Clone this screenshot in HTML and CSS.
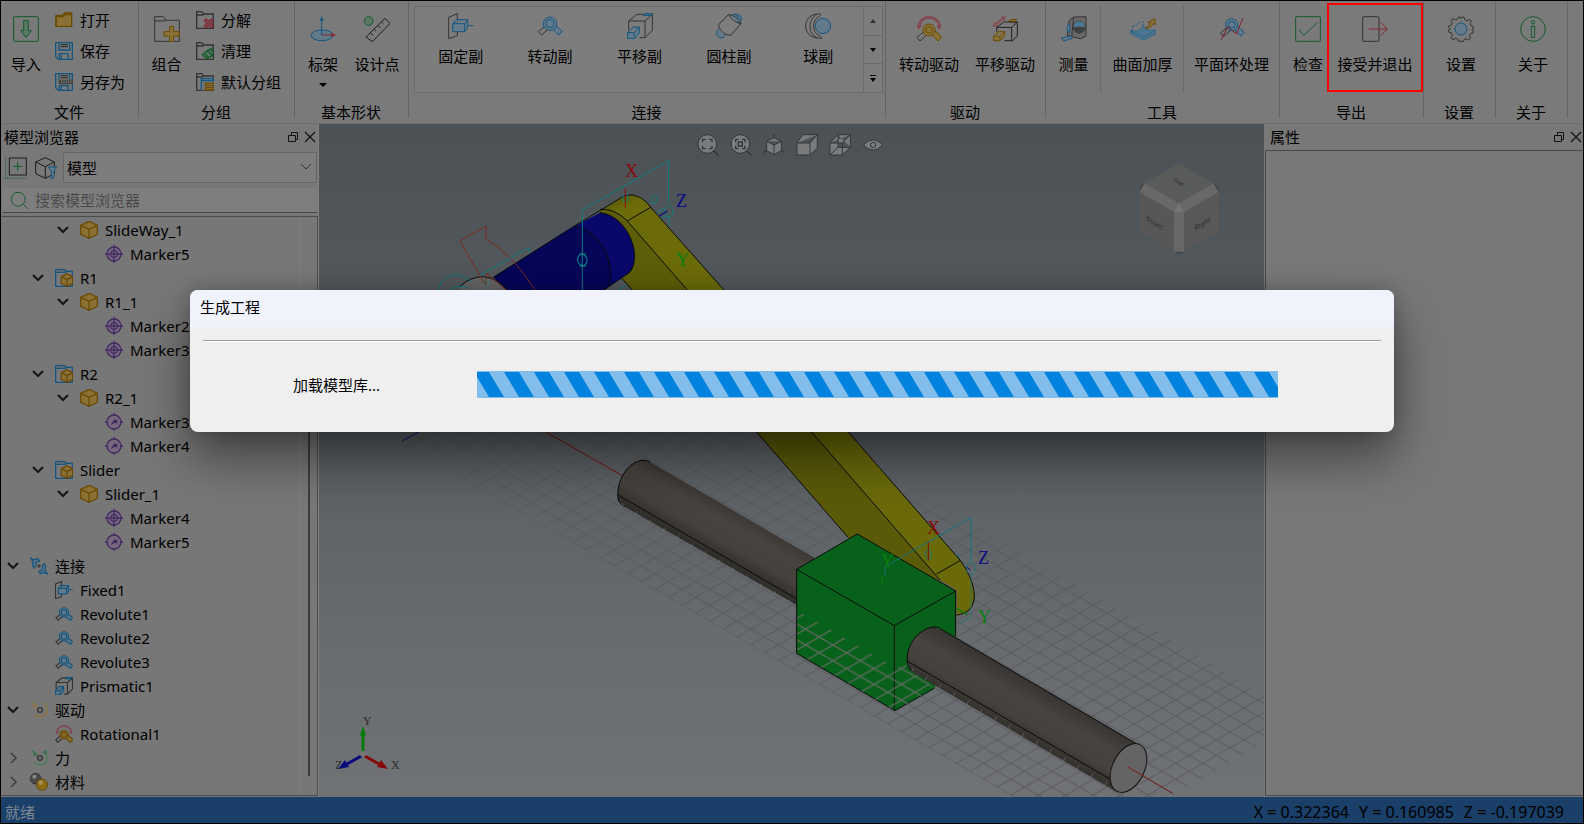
FILE: index.html
```html
<!DOCTYPE html>
<html lang="zh-CN">
<head>
<meta charset="utf-8">
<title>模型浏览器</title>
<link rel="stylesheet" href="styles.css">
</head>
<body>
<svg class="defs" aria-hidden="true">
  <symbol id="i-import" viewBox="0 0 78 78"><rect x="2" y="2" width="74" height="74" rx="2" class="gn"/><path d="M32 14h14v30h9L39 65 23 44h9z" class="gn gnf"/></symbol>
  <symbol id="i-open" viewBox="0 0 54 54"><path d="M3 13V46H50V6H28L24 13Z" class="go gof"/><path d="M3 46V17H26L30 11H50" class="go"/></symbol>
  <symbol id="i-save" viewBox="0 0 54 54"><path d="M2 2H52V52H10L2 44Z" class="bl"/><path d="M12 2V24H44V2M13 52V35H39V52M19 38V52" class="bl"/><path d="M17 8H39M17 14H39" class="gy"/></symbol>
  <symbol id="i-saveas" viewBox="0 0 54 54"><path d="M2 2H52V52H10L2 44Z" class="bl"/><path d="M12 2V20M44 2V20M13 52V38H39V52M19 40V52" class="bl"/><path d="M17 8H39M17 14H39" class="gy"/><rect x="11" y="20" width="43" height="14" fill="#454545"/><path d="M20 22V30M27 22V30M34 22V30M41 22V30M48 22V30" stroke="#858585" stroke-width="2"/></symbol>
  <symbol id="i-group" viewBox="0 0 80 80"><path d="M2 78V2H29L36 13H78V78Z" class="gy"/><path d="M2 15H36" class="gy"/><path d="M48 32H60V48H78V62H60V79H48V62H31V48H48Z" class="go gof"/></symbol>
  <symbol id="i-split" viewBox="0 0 54 54"><path d="M2 52V2H17L23 9H52V52ZM2 12H23" class="gy"/><path d="M24 29L31 23 38 30 45 23 52 29 46 37 53 44 46 51 38 44 31 51 24 44 31 37Z" fill="#80404a" stroke="#85202f" stroke-width="3"/></symbol>
  <symbol id="i-clean" viewBox="0 0 54 54"><path d="M2 52V2H17L23 9H52V52ZM2 12H23" class="gy"/><path d="M19 38L35 25 49 41 33 50ZM35 25L42 21 52 31 49 41ZM45 22L54 15" class="gn gnf"/><path d="M26 34L38 47" class="gn"/></symbol>
  <symbol id="i-default" viewBox="0 0 54 54"><path d="M2 52V2H17L23 9H52V52ZM2 12H23" class="gy"/><path d="M15 14H53V52H15Z" fill="#777"/><path d="M16 17H52V23H16ZM16 23V51" class="bl blf"/><path d="M28 31H53V38H28ZM28 44H53V51H28Z" class="go gof"/></symbol>
  <symbol id="i-frame" viewBox="0 0 78 78"><ellipse cx="36" cy="58" rx="33" ry="16" class="bl blf"/><path d="M35 57V8" class="bl"/><path d="M28 15L35 1 42 15Z" fill="#1c5a86"/><path d="M35 57H68" stroke="#8a2030" stroke-width="3"/><path d="M64 51L78 57 64 63Z" fill="#8a2030"/></symbol>
  <symbol id="i-ruler" viewBox="0 0 78 78"><circle cx="14" cy="15" r="13" class="gn gnf"/><path d="M6 63L63 7 78 22 25 77ZM20 51L27 58M31 40L36 45M42 29L49 36M53 18L58 23" class="gy dark"/></symbol>
  <symbol id="i-fixed" viewBox="0 0 78 78"><path d="M2 13L28 2V68L2 77Z" class="gy"/><path d="M14 32L26 20H59V43L50 56H14ZM14 32H50L59 20M50 32V56M59 38H77" class="bl blf"/></symbol>
  <symbol id="i-revolute" viewBox="0 0 78 60"><path d="M4 47L28 28 35 38 14 57Z" class="gy"/><path d="M45 38L54 27 76 46 66 57Z" class="bl blf"/><circle cx="39" cy="23" r="20" class="bl blf"/><circle cx="39" cy="23" r="12" class="bl"/></symbol>
  <symbol id="i-prism" viewBox="0 0 78 78"><path d="M5 24L30 4H76V52L54 74H38M5 24H54V74M54 24L76 4M5 24V52" class="gy"/><path d="M49 7L54 2H77L73 7Z" class="bl blf"/><path d="M2 59L18 42H37V60L23 77H2ZM2 59H22L37 42M22 59V77" class="bl blf"/></symbol>
  <symbol id="i-cyl" viewBox="0 0 78 78"><path d="M46 10C52 -4 78 6 77 18C76 27 68 30 61 27" class="bl blf"/><path d="M56 3L73 18" class="bl"/><path d="M8 35L37 5C50 4 70 18 75 32L45 66C30 70 8 52 8 35Z" class="gy"/><path d="M37 5C45 18 60 30 75 32" class="gy"/><path d="M9 49C-2 54 2 65 4 68C12 79 26 76 26 64" class="bl blf"/></symbol>
  <symbol id="i-ball" viewBox="0 0 78 78"><circle cx="54" cy="39" r="23" class="bl blf"/><path d="M44 3C-12 0 -12 78 44 75C58 80 48 70 42 68C20 55 20 22 42 11C48 7 50 4 44 3ZM36 4C8 18 8 62 36 75" class="gy"/></symbol>
  <symbol id="i-rotdrv" viewBox="0 0 78 78"><path d="M9 29C14 -4 66 -4 70 29" fill="none" stroke="#87404a" stroke-width="8"/><path d="M9 29C14 -4 66 -4 70 29" fill="none" stroke="#80656a" stroke-width="2"/><path d="M2 28H18L8 41ZM62 28H77L70 41Z" fill="#87404a"/><path d="M3 64L28 44 36 54 12 75Z" class="gy"/><path d="M45 54L54 42 77 62 66 75Z" class="go gof"/><circle cx="39" cy="42" r="18" class="go gof"/><circle cx="39" cy="42" r="10" class="go"/></symbol>
  <symbol id="i-lindrv" viewBox="0 0 82 82"><path d="M3 32L8 19 12 23 32 7 29 3 43 2 38 14 34 11 14 28 17 32Z" fill="#80555b" stroke="#87404a" stroke-width="2"/><path d="M53 16L60 11H77L74 20Z" class="go gof"/><path d="M15 36L36 19H80V63L64 78H39M15 36H62V78M62 36L80 19M15 36V50" class="gy dark"/><path d="M5 64L20 49H40V62L26 78H5ZM5 64H25L40 49M25 64V78" class="go gof"/></symbol>
  <symbol id="i-tape" viewBox="0 0 80 80"><path d="M25 14L40 3 77 2V62L60 70 19 60Z" class="gy gyf"/><path d="M39 4L33 62" class="gy"/><circle cx="56" cy="34" r="18" class="gy"/><path d="M38 34A18 18 0 0 1 74 34Q56 28 38 34Z" fill="#467a98"/><path d="M38 36Q56 30 74 36A18 18 0 0 1 38 36Z" fill="#3e4245"/><path d="M22 28Q14 40 20 48L27 50V26Z" class="bl blf"/><path d="M1 68L34 61 34 69 9 77Z" class="bl blf"/></symbol>
  <symbol id="i-surf" viewBox="0 0 84 78"><path d="M2 44L24 46 44 30 62 44 82 42V56L44 75 2 54Z" fill="#4c7690" stroke="#1c5f88" stroke-width="2"/><path d="M2 46L44 66 82 44M10 30L34 17M8 46V28M42 30V14" class="bl" stroke-dasharray="6 4"/><path d="M48 37C58 32 64 24 66 18L58 18 80 5 82 26 76 20C72 31 62 37 48 37Z" class="go gof"/></symbol>
  <symbol id="i-ring" viewBox="0 0 78 72"><path d="M4 49L26 29 34 41 14 58Z" class="gy"/><path d="M45 38L54 27 76 46 66 57Z" class="bl blf"/><circle cx="38" cy="23" r="18" class="bl blf"/><circle cx="38" cy="23" r="10" class="bl"/><path d="M7 68L26 29 52 51 72 3" fill="none" stroke="#851c2b" stroke-width="3"/></symbol>
  <symbol id="i-check" viewBox="0 0 78 78"><rect x="2" y="2" width="74" height="74" rx="2" class="gn"/><path d="M12 42L26 58 67 20" class="gn"/></symbol>
  <symbol id="i-exit" viewBox="0 0 78 78"><rect x="2" y="2" width="49" height="74" rx="4" class="gy"/><path d="M20 39H74M57 20L76 39 57 58" fill="none" stroke="#8c2436" stroke-width="3"/></symbol>
  <symbol id="i-gear" viewBox="0 0 78 78"><path d="M31 3H36L39 8 42 3H48L50 11 57 15 65 10 70 15 66 23 69 29 76 32V38L71 41 76 44V50L68 53 64 59 68 67 62 72 54 68 48 71 46 76H32L30 70 23 67 15 71 9 66 13 58 9 50 2 48V42L7 39 2 35V30L10 27 13 20 9 13 15 8 23 12 29 9Z" class="gy"/><circle cx="39" cy="39" r="18" class="bl blf"/></symbol>
  <symbol id="i-about" viewBox="0 0 78 78"><circle cx="39" cy="39" r="37" class="gn"/><circle cx="39" cy="19" r="5" class="gn"/><rect x="34" y="31" width="10" height="33" class="gn"/></symbol>
  <symbol id="i-part" viewBox="0 0 54 54"><path d="M2 13L28 1 52 13V39L27 52 2 40Z" class="go gof"/><path d="M2 13L27 25 52 13M27 25V52" class="go"/></symbol>
  <symbol id="i-asm" viewBox="0 0 54 54"><path d="M2 52V2H28L34 7H52V52Z" class="bl"/><path d="M2 10H34" class="bl"/><path d="M19 23L36 14 53 23V43L36 52 19 43Z" class="go gof"/><path d="M19 23L36 32 53 23M36 32V52" class="go"/></symbol>
  <symbol id="i-mark" viewBox="0 0 54 54"><circle cx="27" cy="27" r="21" class="pu puf"/><circle cx="27" cy="27" r="10" class="pu"/><path d="M27 0V54M0 27H54" class="pu"/></symbol>
  <symbol id="i-markref" viewBox="0 0 54 54"><circle cx="27" cy="27" r="21" class="pu puf"/><path d="M27 0V8M27 46V54M0 27H8M46 27H54" class="pu"/><path d="M18 37Q19 27 27 25L24 20H37V33L32 29Q24 30 18 37Z" fill="#43285f"/></symbol>
  <symbol id="i-joints" viewBox="0 0 54 54"><path d="M2 3L12 9 23 4 28 12 18 15 18 24 13 33 8 26 10 17ZM52 51L42 46 31 50 27 43 37 39 37 27 42 20 47 28 45 39Z" class="bl blf"/><circle cx="27" cy="27" r="5" fill="#3c3c3c"/></symbol>
  <symbol id="i-drives" viewBox="0 0 54 54"><path d="M2 2L10 5 18 13 20 9 22 22 9 20 13 17Z" fill="#8a7340"/><path d="M38 9H50M48 14C60 35 42 58 12 42" fill="none" stroke="#86744c" stroke-width="6"/><circle cx="30" cy="27" r="7" class="gy"/></symbol>
  <symbol id="i-forces" viewBox="0 0 54 54"><path d="M2 2L10 5 18 13 20 9 22 22 9 20 13 17Z" fill="#3e7352"/><path d="M48 16C60 35 42 58 12 42" fill="none" stroke="#587c65" stroke-width="6"/><path d="M36 10L51 2 50 20Z" fill="#3e7352"/><circle cx="30" cy="27" r="7" class="gy"/></symbol>
  <symbol id="i-mat" viewBox="0 0 54 54"><circle cx="17" cy="17" r="16" fill="#4a4a4a" stroke="#222" stroke-width="2"/><circle cx="13" cy="11" r="6" fill="#888"/><circle cx="36" cy="35" r="17" fill="#8a6a14" stroke="#4e3903" stroke-width="2"/><circle cx="32" cy="29" r="7" fill="#a48f4b"/></symbol>
  <symbol id="i-down" viewBox="0 0 16 16"><path d="M3 5L8 10 13 5" fill="none" stroke="#151515" stroke-width="2"/></symbol>
  <symbol id="i-right" viewBox="0 0 16 16"><path d="M6 3L11 8 6 13" fill="none" stroke="#3c3c3c" stroke-width="1.5"/></symbol>
  <symbol id="i-float" viewBox="0 0 12 12"><path d="M1.500 4.500H8.500V10.500H1.500ZM4.500 4V1.500H10.500V8.500H9" fill="none" stroke="#111"/></symbol>
  <symbol id="i-close" viewBox="0 0 12 12"><path d="M1 1L11 11M11 1L1 11" fill="none" stroke="#111" stroke-width="1.200"/></symbol>
</svg>

<div class="app">
  <header class="ribbon">
    <section class="group g-file">
      <div class="tools">
        <button class="big"><svg><use href="#i-import"/></svg>导入</button>
        <div class="stack">
          <button class="small"><svg><use href="#i-open"/></svg>打开</button>
          <button class="small"><svg><use href="#i-save"/></svg>保存</button>
          <button class="small"><svg><use href="#i-saveas"/></svg>另存为</button>
        </div>
      </div>
      <h2>文件</h2>
    </section>
    <section class="group g-group">
      <div class="tools">
        <button class="big"><svg><use href="#i-group"/></svg>组合</button>
        <div class="stack">
          <button class="small"><svg><use href="#i-split"/></svg>分解</button>
          <button class="small"><svg><use href="#i-clean"/></svg>清理</button>
          <button class="small"><svg><use href="#i-default"/></svg>默认分组</button>
        </div>
      </div>
      <h2>分组</h2>
    </section>
    <section class="group g-shape">
      <div class="tools">
        <button class="big"><svg><use href="#i-frame"/></svg>标架<i class="caret"></i></button>
        <button class="big"><svg><use href="#i-ruler"/></svg>设计点</button>
      </div>
      <h2>基本形状</h2>
    </section>
    <section class="group g-joint">
      <div class="gallery">
        <button class="item"><svg><use href="#i-fixed"/></svg>固定副</button>
        <button class="item"><svg><use href="#i-revolute"/></svg>转动副</button>
        <button class="item"><svg><use href="#i-prism"/></svg>平移副</button>
        <button class="item"><svg><use href="#i-cyl"/></svg>圆柱副</button>
        <button class="item"><svg><use href="#i-ball"/></svg>球副</button>
        <div class="pager">
          <button aria-label="上一行"><i class="caret up"></i></button>
          <button aria-label="下一行"><i class="caret"></i></button>
          <button aria-label="更多"><i class="caret more"></i></button>
        </div>
      </div>
      <h2>连接</h2>
    </section>
    <section class="group g-drive">
      <div class="tools">
        <button class="big"><svg><use href="#i-rotdrv"/></svg>转动驱动</button>
        <button class="big"><svg><use href="#i-lindrv"/></svg>平移驱动</button>
      </div>
      <h2>驱动</h2>
    </section>
    <section class="group g-tool">
      <div class="tools">
        <button class="big w1"><svg><use href="#i-tape"/></svg>测量</button>
        <button class="big w2"><svg><use href="#i-surf"/></svg>曲面加厚</button>
        <button class="big w3"><svg><use href="#i-ring"/></svg>平面环处理</button>
      </div>
      <h2>工具</h2>
    </section>
    <section class="group g-export">
      <div class="tools">
        <button class="big check"><svg><use href="#i-check"/></svg>检查</button>
        <button class="big marked"><svg><use href="#i-exit"/></svg>接受并退出</button>
      </div>
      <h2>导出</h2>
    </section>
    <section class="group g-one">
      <div class="tools"><button class="big"><svg><use href="#i-gear"/></svg>设置</button></div>
      <h2>设置</h2>
    </section>
    <section class="group g-one">
      <div class="tools"><button class="big"><svg><use href="#i-about"/></svg>关于</button></div>
      <h2>关于</h2>
    </section>
  </header>

  <main class="work">
    <aside class="dock browser">
      <div class="dock-title"><h1>模型浏览器</h1><button aria-label="浮动"><svg><use href="#i-float"/></svg></button><button aria-label="关闭"><svg><use href="#i-close"/></svg></button></div>
      <div class="filter">
        <button aria-label="全部展开"><svg viewBox="0 0 66 66"><path d="M2 2V64H66" class="gn" stroke-dasharray="3 3"/><rect x="13" y="3" width="51" height="51" class="gy dark"/><path d="M38 14V43M24 28H53" class="gn"/></svg></button>
        <button aria-label="筛选"><svg viewBox="0 0 66 66"><path d="M2 15L31 2 58 15V50L31 64 2 50ZM2 15L31 29 58 15M31 29V64" class="gy dark"/><path d="M40 30H66L57 42V60L49 66V42Z" class="bl blf"/></svg></button>
        <label class="combo"><select aria-label="视图"><option>模型</option></select><svg viewBox="0 0 18 16"><path d="M4 5L9 10 14 5" fill="none" stroke="#333"/></svg></label>
      </div>
      <label class="search"><svg viewBox="0 0 60 60"><circle cx="26" cy="26" r="22" class="gn"/><path d="M42 42L56 56" class="gn"/></svg><input type="text" placeholder="搜索模型浏览器" aria-label="搜索模型浏览器"></label>
      <div class="tree">
        <ul>
          <li class="d2"><button aria-label="折叠"><svg><use href="#i-down"/></svg></button><svg><use href="#i-part"/></svg>SlideWay_1</li>
          <li class="d3"><svg><use href="#i-mark"/></svg>Marker5</li>
          <li class="d1"><button aria-label="折叠"><svg><use href="#i-down"/></svg></button><svg><use href="#i-asm"/></svg>R1</li>
          <li class="d2"><button aria-label="折叠"><svg><use href="#i-down"/></svg></button><svg><use href="#i-part"/></svg>R1_1</li>
          <li class="d3"><svg><use href="#i-mark"/></svg>Marker2</li>
          <li class="d3"><svg><use href="#i-mark"/></svg>Marker3</li>
          <li class="d1"><button aria-label="折叠"><svg><use href="#i-down"/></svg></button><svg><use href="#i-asm"/></svg>R2</li>
          <li class="d2"><button aria-label="折叠"><svg><use href="#i-down"/></svg></button><svg><use href="#i-part"/></svg>R2_1</li>
          <li class="d3"><svg><use href="#i-markref"/></svg>Marker3</li>
          <li class="d3"><svg><use href="#i-markref"/></svg>Marker4</li>
          <li class="d1"><button aria-label="折叠"><svg><use href="#i-down"/></svg></button><svg><use href="#i-asm"/></svg>Slider</li>
          <li class="d2"><button aria-label="折叠"><svg><use href="#i-down"/></svg></button><svg><use href="#i-part"/></svg>Slider_1</li>
          <li class="d3"><svg><use href="#i-mark"/></svg>Marker4</li>
          <li class="d3"><svg><use href="#i-markref"/></svg>Marker5</li>
          <li class="d0"><button aria-label="折叠"><svg><use href="#i-down"/></svg></button><svg><use href="#i-joints"/></svg>连接</li>
          <li class="d1 leaf"><svg><use href="#i-fixed"/></svg>Fixed1</li>
          <li class="d1 leaf"><svg><use href="#i-revolute"/></svg>Revolute1</li>
          <li class="d1 leaf"><svg><use href="#i-revolute"/></svg>Revolute2</li>
          <li class="d1 leaf"><svg><use href="#i-revolute"/></svg>Revolute3</li>
          <li class="d1 leaf"><svg><use href="#i-prism"/></svg>Prismatic1</li>
          <li class="d0"><button aria-label="折叠"><svg><use href="#i-down"/></svg></button><svg><use href="#i-drives"/></svg>驱动</li>
          <li class="d1 leaf"><svg><use href="#i-rotdrv"/></svg>Rotational1</li>
          <li class="d0"><button aria-label="展开"><svg><use href="#i-right"/></svg></button><svg><use href="#i-forces"/></svg>力</li>
          <li class="d0"><button aria-label="展开"><svg><use href="#i-right"/></svg></button><svg><use href="#i-mat"/></svg>材料</li>
        </ul>
        <div class="track"><div class="thumb"></div></div>
      </div>
    </aside>

    <section class="view" aria-label="三维视图">
      <svg class="scene" viewBox="319 124 945 673" preserveAspectRatio="xMidYMid slice">
        <defs>
          <pattern id="grid" width="27.4" height="15.8" patternUnits="userSpaceOnUse" x="600" y="558"><path d="M0 0L27.4 15.8M0 15.8L27.4 0" stroke="#555457" stroke-width="1" fill="none"/></pattern>
          <pattern id="gridlight" width="27.4" height="15.8" patternUnits="userSpaceOnUse" x="600" y="558"><path d="M0 0L27.4 15.8M0 15.8L27.4 0" stroke="#60695f" stroke-width="1.3" fill="none"/></pattern>
          <linearGradient id="shaft" gradientUnits="userSpaceOnUse" x1="735" y1="505" x2="708" y2="552"><stop offset="0" stop-color="#373432"/><stop offset=".35" stop-color="#48433f"/><stop offset=".7" stop-color="#45413d"/><stop offset="1" stop-color="#302e2a"/></linearGradient>
          <linearGradient id="shaft2" gradientUnits="userSpaceOnUse" x1="1040" y1="687" x2="1013" y2="734"><stop offset="0" stop-color="#373432"/><stop offset=".35" stop-color="#48433f"/><stop offset=".7" stop-color="#45413d"/><stop offset="1" stop-color="#302e2a"/></linearGradient>
          <linearGradient id="cap" x1="0" y1="0" x2="1" y2="1"><stop offset="0" stop-color="#4a4a06"/><stop offset=".5" stop-color="#6c6c0a"/><stop offset="1" stop-color="#6c6c0a"/></linearGradient>
        </defs>
        <path d="M378 430L1092 842 1307 718 760 402H427Z" fill="url(#grid)" opacity=".8"/>
        <path d="M402 441L419 432" stroke="#10106a" fill="none"/>
        <path d="M546 432L623 476" stroke="#7a1414" fill="none"/>

        <path d="M643 460C625 462 616 482 618 500L625 507 800 607 815 558 650 462Z" fill="url(#shaft)"/>
        <path d="M650 462Q647 460 643 460C627 462 616 482 618 498Q619 504 625 507M618 495L797 599" class="edge"/>

        <g transform="translate(600 430) scale(.3333)">
          <path d="M470 6L635 6 1020 450 960 440 745 323Z" fill="#5a5a09"/>
          <path d="M635 6H745L1080 390C1110 430 1128 480 1122 510Q1118 548 1070 556V480L1020 450Z" fill="#6a6a0a"/>
          <path d="M470 6L745 323M635 6L1020 450M745 6L1080 390C1110 430 1128 480 1122 510Q1118 548 1070 556M1010 432L1080 392" class="edge3"/>
          <path d="M772 312L1067 483V618L1003 775 885 842 588 670 590 418Z" fill="#07611a"/>
          <path d="M590 418L772 312 1067 483V618M1067 483L883 587 590 418V670L885 842 1003 775M883 587V842" class="edge3"/>
        </g>
        <path d="M797 614L804 614 896 668 907 664 934 688 895 711 797 653Z" fill="url(#gridlight)"/>

        <path d="M933 627C915 630 904 650 908 664L912 672 1117 792 1137 744 944 631Z" fill="url(#shaft2)"/>
        <path d="M1137 744L944 631Q939 626 933 627C915 630 904 650 908 666L912 672M907 661L1110 779" class="edge"/>
        <path d="M912 670L1114 788" stroke="#777" stroke-width="4" stroke-dasharray="1 15" opacity=".55" fill="none"/>
        <path d="M622 505L795 605" stroke="#777" stroke-width="4" stroke-dasharray="1 15" opacity=".55" fill="none"/>
        <ellipse cx="1128.500" cy="768" rx="16" ry="26" transform="rotate(26 1128.500 768)" fill="#646464" stroke="#111"/>
        <path d="M1128 767L1172 793" stroke="#7a1818" fill="none"/>

        <g transform="translate(600 430) scale(.3333)" fill="none" stroke-width="3">
          <path d="M855 435V410L1113 263V395" stroke="#14767b"/>
          <path d="M1113 430V560L1070 586" stroke="#14767b" stroke-dasharray="6 4"/>
          <ellipse cx="985" cy="373" rx="9" ry="15" stroke="#14767b"/><ellipse cx="1113" cy="415" rx="13" ry="18" stroke="#14767b" stroke-dasharray="12 4"/>
          <path d="M1068 374L1080 380" stroke="#14767b"/>
          <path d="M985 337V392" stroke="#7c0c0c"/><path d="M847 443V461M1070 536L1102 554" stroke="#0a7d0a" stroke-width="4"/>
          <path d="M1100 412L1112 420" stroke="#0a0a80"/>
        </g>
        <text x="927" y="534" class="ax r">X</text><text x="978" y="564" class="ax b">Z</text><text x="978" y="623" class="ax g">Y</text><text x="881" y="567" class="ax g">Y</text>

        <g transform="translate(420 120) scale(.3333)">
          <path d="M120 500Q150 470 190 470Q235 475 262 510H120Z" fill="#686664"/>
          <path d="M535 275L612 228C640 218 672 232 692 262L912 510H637L600 470 622 303Z" fill="#6b6b0a"/>
          <path d="M535 275L612 228C640 218 672 232 692 262L622 303Q580 265 535 275Z" fill="url(#cap)"/>
          <path d="M540 272Q585 262 622 303L802 510H637L590 460Z" fill="#5e5e08"/>
          <path d="M220 472L460 320 540 278C610 285 650 370 643 420Q640 450 625 460L552 510H260Z" fill="#08086a"/>
          <path d="M220 472L460 320C540 330 585 420 568 498L552 510H260Z" fill="#060659"/>
          <path d="M120 500Q150 470 190 470Q235 475 262 510M220 472L460 320 612 228C640 218 672 232 692 262L912 510M540 268Q585 265 622 303L802 510M622 303L692 262M460 320C540 330 585 420 568 498M540 278C610 285 650 370 643 420Q640 450 625 460L552 510M605 475L637 510" class="edge3"/>
          <g fill="none" stroke-width="3">
            <path d="M120 363L198 318V357Q280 405 345 510M120 363L196 495M200 460L258 510M200 460L196 492" stroke="#7e2a20"/>
            <path d="M487 510V270L746 122V250M746 290V318M327 400V383L180 466" stroke="#0e7c7c"/>
            <path d="M57 508C64 460 125 450 158 490M95 508C110 495 140 498 150 508M595 508L620 494" stroke="#0e7c7c"/>
            <ellipse cx="487" cy="420" rx="14" ry="17" stroke="#0e8c8c" transform="rotate(-15 487 420)"/><path d="M478 402H498M478 438H498" stroke="#0e8c8c"/>
            <ellipse cx="616" cy="234" rx="8" ry="12" stroke="#0e7c7c"/><ellipse cx="702" cy="240" rx="8" ry="12" stroke="#0e7c7c" transform="rotate(25 702 240)"/><ellipse cx="746" cy="274" rx="13" ry="18" stroke="#0e7c7c" stroke-dasharray="10 3"/><path d="M710 278L738 262M722 297L746 284" stroke="#0e7c7c"/>
            <ellipse cx="200" cy="490" rx="8" ry="11" stroke="#3c7c7c"/>
            <path d="M616 206V263" stroke="#8c0c0c"/><path d="M718 288L742 273" stroke="#0a0a8c" stroke-width="4"/>
          </g>
        </g>
        <text x="625" y="177" class="ax r">X</text><text x="676" y="207" class="ax b">Z</text><text x="676" y="266" class="ax g">Y</text>

        <g transform="translate(1080 140) scale(.3333)">
          <path d="M178 145L188 130 208 140 190 160ZM402 130L416 142V155L400 160ZM280 333H314L297 344Z" fill="#444648"/>
          <path d="M297 70L400 130 297 190 193 130Z" fill="#595a5a"/>
          <path d="M178 155L282 215V335L178 275Z" fill="#575757"/><path d="M312 215L416 155V275L312 335Z" fill="#585858"/>
          <path d="M193 130L297 190 282 216 179 156ZM400 130L297 190 312 216 416 156ZM282 216L297 188 312 216V335H282Z" fill="#686868"/>
          <path d="M282 216L297 188 312 216Z" fill="#757575"/>
          <g font-family="Noto Sans, sans-serif" font-size="22" fill="#2a2a2a"><text transform="matrix(.87 .5 -.6 .5 276 121)">Top</text><text transform="matrix(.87 .5 0 1 200 244)">Front</text><text transform="matrix(.87 -.5 0 1 344 272)">Right</text></g>
        </g>

        <g fill="none" stroke-width="3"><path d="M363 755V735" stroke="#087a08"/><path d="M363 755L379 764" stroke="#850808"/><path d="M363 755L347 764" stroke="#08087c"/></g>
        <path d="M363 726L360 735Q363 738 366 735Z" fill="#087a08"/><path d="M388 769L381 760 377 767Z" fill="#850808"/><path d="M338 769L345 760 349 767Z" fill="#08087c"/><circle cx="363" cy="754" r="3" fill="#777"/>
        <g class="triad"><text x="363" y="725">Y</text><text x="391" y="769">X</text><text x="335" y="769">Z</text></g>
      </svg>
      <div class="viewbar">
        <button aria-label="适合窗口"><svg viewBox="0 0 66 66"><path d="M50 50L64 64" class="vd"/><circle cx="31" cy="30" r="28" class="vl"/><path d="M17 25V16H26M36 16H45V25M45 35V44H36M26 44H17V35" class="vd"/></svg></button>
        <button aria-label="适合选择"><svg viewBox="0 0 66 66"><path d="M50 50L64 64" class="vd"/><circle cx="31" cy="30" r="28" class="vl"/><path d="M17 25V16H26M36 16H45V25M45 35V44H36M26 44H17V35M25 24H37V36H25Z" class="vd"/></svg></button>
        <button aria-label="坐标轴"><svg viewBox="0 0 66 66"><path d="M33 0V10M10 50L1 55M56 50L65 55" class="vd"/><path d="M11 22L33 11 55 22V50L33 62 11 50ZM11 22L33 33 55 22M33 33V62" class="vl"/></svg></button>
        <button aria-label="着色"><svg viewBox="0 0 66 66"><path d="M3 27L20 2H64V42L42 63H3ZM3 27H42L64 2M42 27V63" class="vl"/></svg></button>
        <button aria-label="线框"><svg viewBox="0 0 66 66"><path d="M3 27L27 2H64V40L40 63H3ZM3 27H40L64 2M40 27V63M27 2V40H64M27 40L3 63" class="vl"/></svg></button>
        <button aria-label="可见性"><svg viewBox="0 0 66 66"><path d="M4 33Q33 2 62 33Q33 64 4 33Z" class="vl"/><circle cx="33" cy="33" r="8" class="vl"/></svg></button>
      </div>
    </section>

    <aside class="dock props">
      <div class="dock-title"><h1>属性</h1><button aria-label="浮动"><svg><use href="#i-float"/></svg></button><button aria-label="关闭"><svg><use href="#i-close"/></svg></button></div>
      <div class="pane"></div>
    </aside>
  </main>

  <footer class="status"><span class="ready">就绪</span><span class="coord">X = 0.322364</span><span class="coord">Y = 0.160985</span><span class="coord">Z = -0.197039</span></footer>

  <div class="overlay">
    <div class="dialog" role="dialog" aria-modal="true" aria-labelledby="dlg">
      <h2 id="dlg">生成工程</h2>
      <hr>
      <div class="progress-row">
        <span id="msg">加载模型库...</span>
        <div class="bar" role="progressbar" aria-labelledby="msg"><svg><defs><pattern id="stripe" width="30" height="25" patternUnits="userSpaceOnUse" x="-3" y="0"><path d="M0 0H15L30 25H15Z" fill="#0083de"/></pattern></defs><rect width="100%" height="25" fill="url(#stripe)"/></svg></div>
      </div>
    </div>
  </div>
</div>
</body>
</html>
```
FILE: styles.css
```css
* { box-sizing: border-box; }
body {
  margin: 0;
  font: 15px/20px "Noto Sans", "Noto Sans CJK SC", sans-serif;
  color: #000;
}
h1, h2 { margin: 0; font-size: 15px; font-weight: 400; }
button, input, select { font: inherit; color: inherit; background: none; border: 0; padding: 0; margin: 0; }
.defs { position: absolute; width: 0; height: 0; }

.gn, .bl, .go, .gy, .pu { fill: none; stroke-width: var(--line, 3); }
.gn { stroke: #145a2e; }
.bl { stroke: #14567f; }
.go { stroke: #6b4b04; }
.gy { stroke: #333; }
.pu { stroke: #452a62; }
.gnf { fill: #5b7864; }
.blf { fill: #637a8a; }
.gof { fill: #8a7237; }
.gyf { fill: #686868; }
.puf { fill: #756a80; }
.gy.dark { stroke: #1c1c1c; }
.vl { fill: #7a7b7c; stroke: #333638; stroke-width: 3; }
.vd { fill: none; stroke: #333638; stroke-width: 4; }

.app {
  position: relative;
  display: flex;
  flex-direction: column;
  height: 100vh;
  border: 1px solid #000;
  overflow: hidden;
  background: #787878;
}

/* ribbon */
.ribbon { display: flex; flex: none; height: 123px; background: #7a7a7a; border-bottom: 1px solid #6d6d6d; }
.group {
  display: flex;
  flex-direction: column;
  flex: none;
  background: linear-gradient(#656565, #656565) right top / 1px 117px no-repeat;
}
.group > h2 { text-align: center; margin-top: auto; padding: 0 2px 1px 0; }
.tools { display: flex; height: 93px; }
.big { display: flex; flex-direction: column; align-items: center; padding-top: 15px; white-space: nowrap; }
.big svg { width: 26px; height: 26px; margin-bottom: 12px; }
.stack { display: flex; flex-direction: column; padding: 3px 0 0 4px; }
.small { display: flex; align-items: center; flex: none; gap: 7px; height: 31px; white-space: nowrap; --line: 4; }
.small svg { width: 18px; height: 18px; }
.caret { width: 0; height: 0; border: 4px solid transparent; border-top-color: #000; border-bottom: 0; }
.big .caret { margin-top: 9px; }
.g-file { width: 138px; }
.g-file .big { width: 50px; }
.g-group { width: 156px; }
.g-group .tools { padding-left: 2px; }
.g-group .big { width: 51px; }
.g-shape { width: 114px; }
.g-shape .tools { padding-left: 1px; }
.g-shape .big { width: 54px; }
.g-joint { width: 477px; }
.g-drive { width: 160px; }
.g-drive .tools { padding-left: 5px; }
.g-drive .big { width: 76px; }
.g-tool { width: 234px; }
.g-tool .w1, .g-tool .w2 { background: linear-gradient(#696969, #696969) right 5px / 1px 87px no-repeat; }
.w1 { width: 55px; }
.w2 { width: 83px; }
.w3 { width: 95px; }
.g-export { width: 144px; }
.check { width: 38px; margin-left: 9px; }
.marked { position: relative; width: 96px; }
.marked::after { content: ""; position: absolute; inset: 2px 0 2px 0; border: 2px solid #f00; }
.g-one { width: 72px; }
.g-one .tools { justify-content: center; padding-left: 2px; }

.gallery { display: flex; margin: 5px 3px 0 5px; padding-left: 1px; height: 87px; border: 1px solid #6b6b6b; background: #7d7d7d; }
.item { display: flex; flex-direction: column; align-items: center; flex: 1; padding-top: 6px; }
.item svg { width: 26px; height: 26px; margin-bottom: 7px; }
.pager { display: flex; flex-direction: column; width: 19px; border-left: 1px solid #6b6b6b; }
.pager button { display: flex; flex: 1; flex-direction: column; align-items: center; justify-content: center; }
.pager button + button { border-top: 1px solid #6b6b6b; }
.pager .caret { border-width: 4px 3px 0; }
.pager .up { border-top: 0; border-bottom: 4px solid #333; }
.pager button:last-child::before { content: ""; width: 6px; height: 1px; background: #000; margin-bottom: 2px; }

/* work area */
.work { display: flex; flex: 1; min-height: 0; }
.dock { display: flex; flex-direction: column; flex: none; }
.dock-title { display: flex; align-items: center; gap: 5px; height: 26px; padding: 0 2px 0 3px; }
.dock-title h1 { flex: 1; }
.dock-title button { display: flex; }
.dock-title svg { width: 12px; height: 12px; }
.browser { width: 318px; border-right: 1px solid #828282; }
.filter { display: flex; align-items: center; height: 35px; padding: 1px 1px 1px 4px; gap: 8px; }
.filter button { display: flex; }
.filter button svg { width: 22px; height: 22px; }
.combo { position: relative; display: flex; flex: 1; margin-left: -2px; }
.combo select { appearance: none; width: 100%; height: 31px; padding-left: 3px; border: 1px solid #656565; border-radius: 2px; background: #7d7d7d; }
.combo svg { position: absolute; right: 2px; top: 7px; width: 18px; height: 16px; }
.search { display: flex; align-items: center; height: 25px; margin: 3px 1px 0 1px; padding-left: 8px; gap: 6px; background: #7e7e7e; border-bottom: 1px solid #484848; }
.search svg { width: 19px; height: 19px; flex: none; }
.search input { flex: 1; min-width: 0; outline: 0; }
.search input::placeholder { color: #4a4a4a; opacity: 1; }
.tree { --line: 4; display: flex; flex: 1; min-height: 0; margin: 3px 0 1px 0; border: solid #4c4c4c; border-width: 1px 1px 1px 0; overflow: hidden; background: #777; }
.tree ul { flex: 1; margin: 0; padding: 1px 0 0; list-style: none; }
.tree li { display: flex; align-items: center; height: 24px; white-space: nowrap; }
.tree li > svg { width: 18px; height: 18px; margin: 0 7px 0 4px; }
.tree li button { display: flex; width: 25px; padding-left: 4px; }
.tree li button svg { width: 16px; height: 16px; }
.d1 { padding-left: 25px; }
.d2 { padding-left: 50px; }
.d3 { padding-left: 100px; }
.d1.leaf { padding-left: 50px; --line: 5; }
.track { display: flex; flex-direction: column; align-items: center; justify-content: flex-end; width: 18px; padding-bottom: 19px; border-left: 1px solid #7e7e7e; }
.thumb { width: 2px; height: 65%; background: #3d3d3d; }

.view { position: relative; flex: 1; min-width: 0; overflow: hidden; background: linear-gradient(#4b5155, #5a5f63 48%, #676b6e 75%, #707276); }
.scene { display: block; width: 100%; height: 100%; }
.edge { fill: none; stroke: #0a0a0a; stroke-width: 1; }
.edge3 { fill: none; stroke: #0a0a0a; stroke-width: 3; }
.ax { font: 18px "Liberation Serif", serif; }
.r { fill: #8a0a0a; }
.g { fill: #0a800f; }
.b { fill: #0a0a86; }
.triad { font: 12px "Liberation Serif", serif; fill: #2b2b2b; }
.viewbar { position: absolute; top: 10px; left: 0; right: 2px; display: flex; justify-content: center; gap: 11px; }
.viewbar button { display: flex; }
.viewbar svg { width: 22px; height: 22px; }

.props { width: 319px; }
.props .dock-title { padding: 0 1px 0 6px; }
.pane { flex: 1; margin: 0 0 1px 1px; border: 1px solid #494949; border-right: 0; background: #787878; }

.status { display: flex; align-items: center; flex: none; height: 26px; padding: 4px 19px 0 4px; gap: 10px; background: #1a3f69; }
.ready { flex: 1; color: #7d8791; }
.coord { font-size: 16px; }

/* modal */
.overlay { position: absolute; inset: 0; padding: 289px 189px 0 189px; pointer-events: none; }
.dialog { padding-bottom: 34px; border-radius: 8px; background: #efefef; box-shadow: 0 26px 50px rgba(0, 0, 0, .45), 0 0 20px rgba(0, 0, 0, .2); }
.dialog h2 { padding: 7px 10px 10px; border-radius: 8px 8px 0 0; background: #f0f2fc; }
.dialog hr { height: 2px; margin: 13px 13px 29px; border: 0; border-top: 1px solid #9b9b9b; background: #fff; }
.progress-row { display: flex; align-items: center; margin: 0 116px 0 103px; }
.progress-row span { flex: none; width: 184px; }
.bar { flex: 1; height: 27px; padding: 1px 0; background: #83bdeb; }
.bar svg { display: block; width: 100%; height: 25px; }
```
